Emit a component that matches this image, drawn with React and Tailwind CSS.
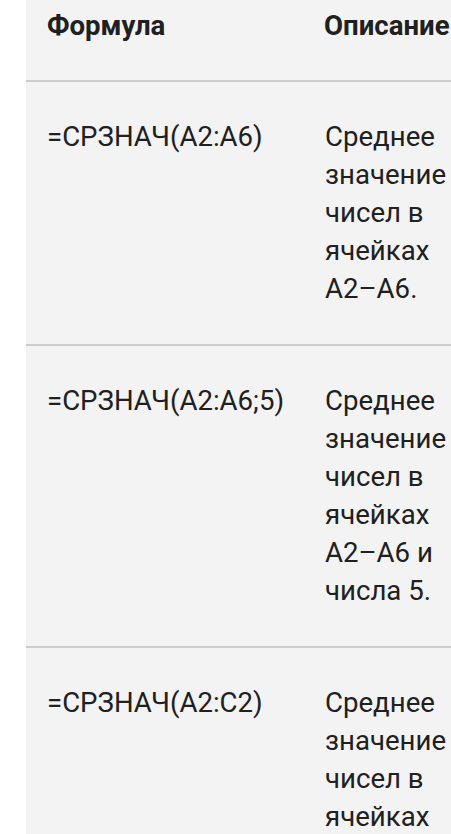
const rows = [
  { formula: '=СРЗНАЧ(A2:A6)', text: 'Среднее значение чисел в ячейках A2–A6.' },
  { formula: '=СРЗНАЧ(A2:A6;5)', text: 'Среднее значение чисел в ячейках A2–A6 и числа 5.' },
  { formula: '=СРЗНАЧ(A2:C2)', text: 'Среднее значение чисел в ячейках A2:C2.' },
];

export default function App() {
  return (
    <div
      className="w-[451px] h-[834px] overflow-hidden bg-white pl-[26px] text-[#202020]"
      style={{ fontFamily: 'Roboto, "Noto Sans", sans-serif' }}
    >
      <div className="w-[520px] bg-[#f3f3f3] min-h-full">
        <div className="flex border-b-2 border-[#cdcdcd] pt-[7px] pb-[35px] text-[27.6px] leading-[38px] font-bold">
          <div className="w-[278px] pl-[21px] shrink-0">Формула</div>
          <div className="pl-[20px]">Описание</div>
        </div>
        {rows.map((r, i) => (
          <div
            key={i}
            className="flex border-b-2 border-[#cdcdcd] pt-[36px] pb-[36px] text-[27.6px] leading-[38px]"
          >
            <div className="w-[278px] pl-[21px] shrink-0">{r.formula}</div>
            <div className="pl-[21px] w-[152px]">{r.text}</div>
          </div>
        ))}
      </div>
    </div>
  );
}
